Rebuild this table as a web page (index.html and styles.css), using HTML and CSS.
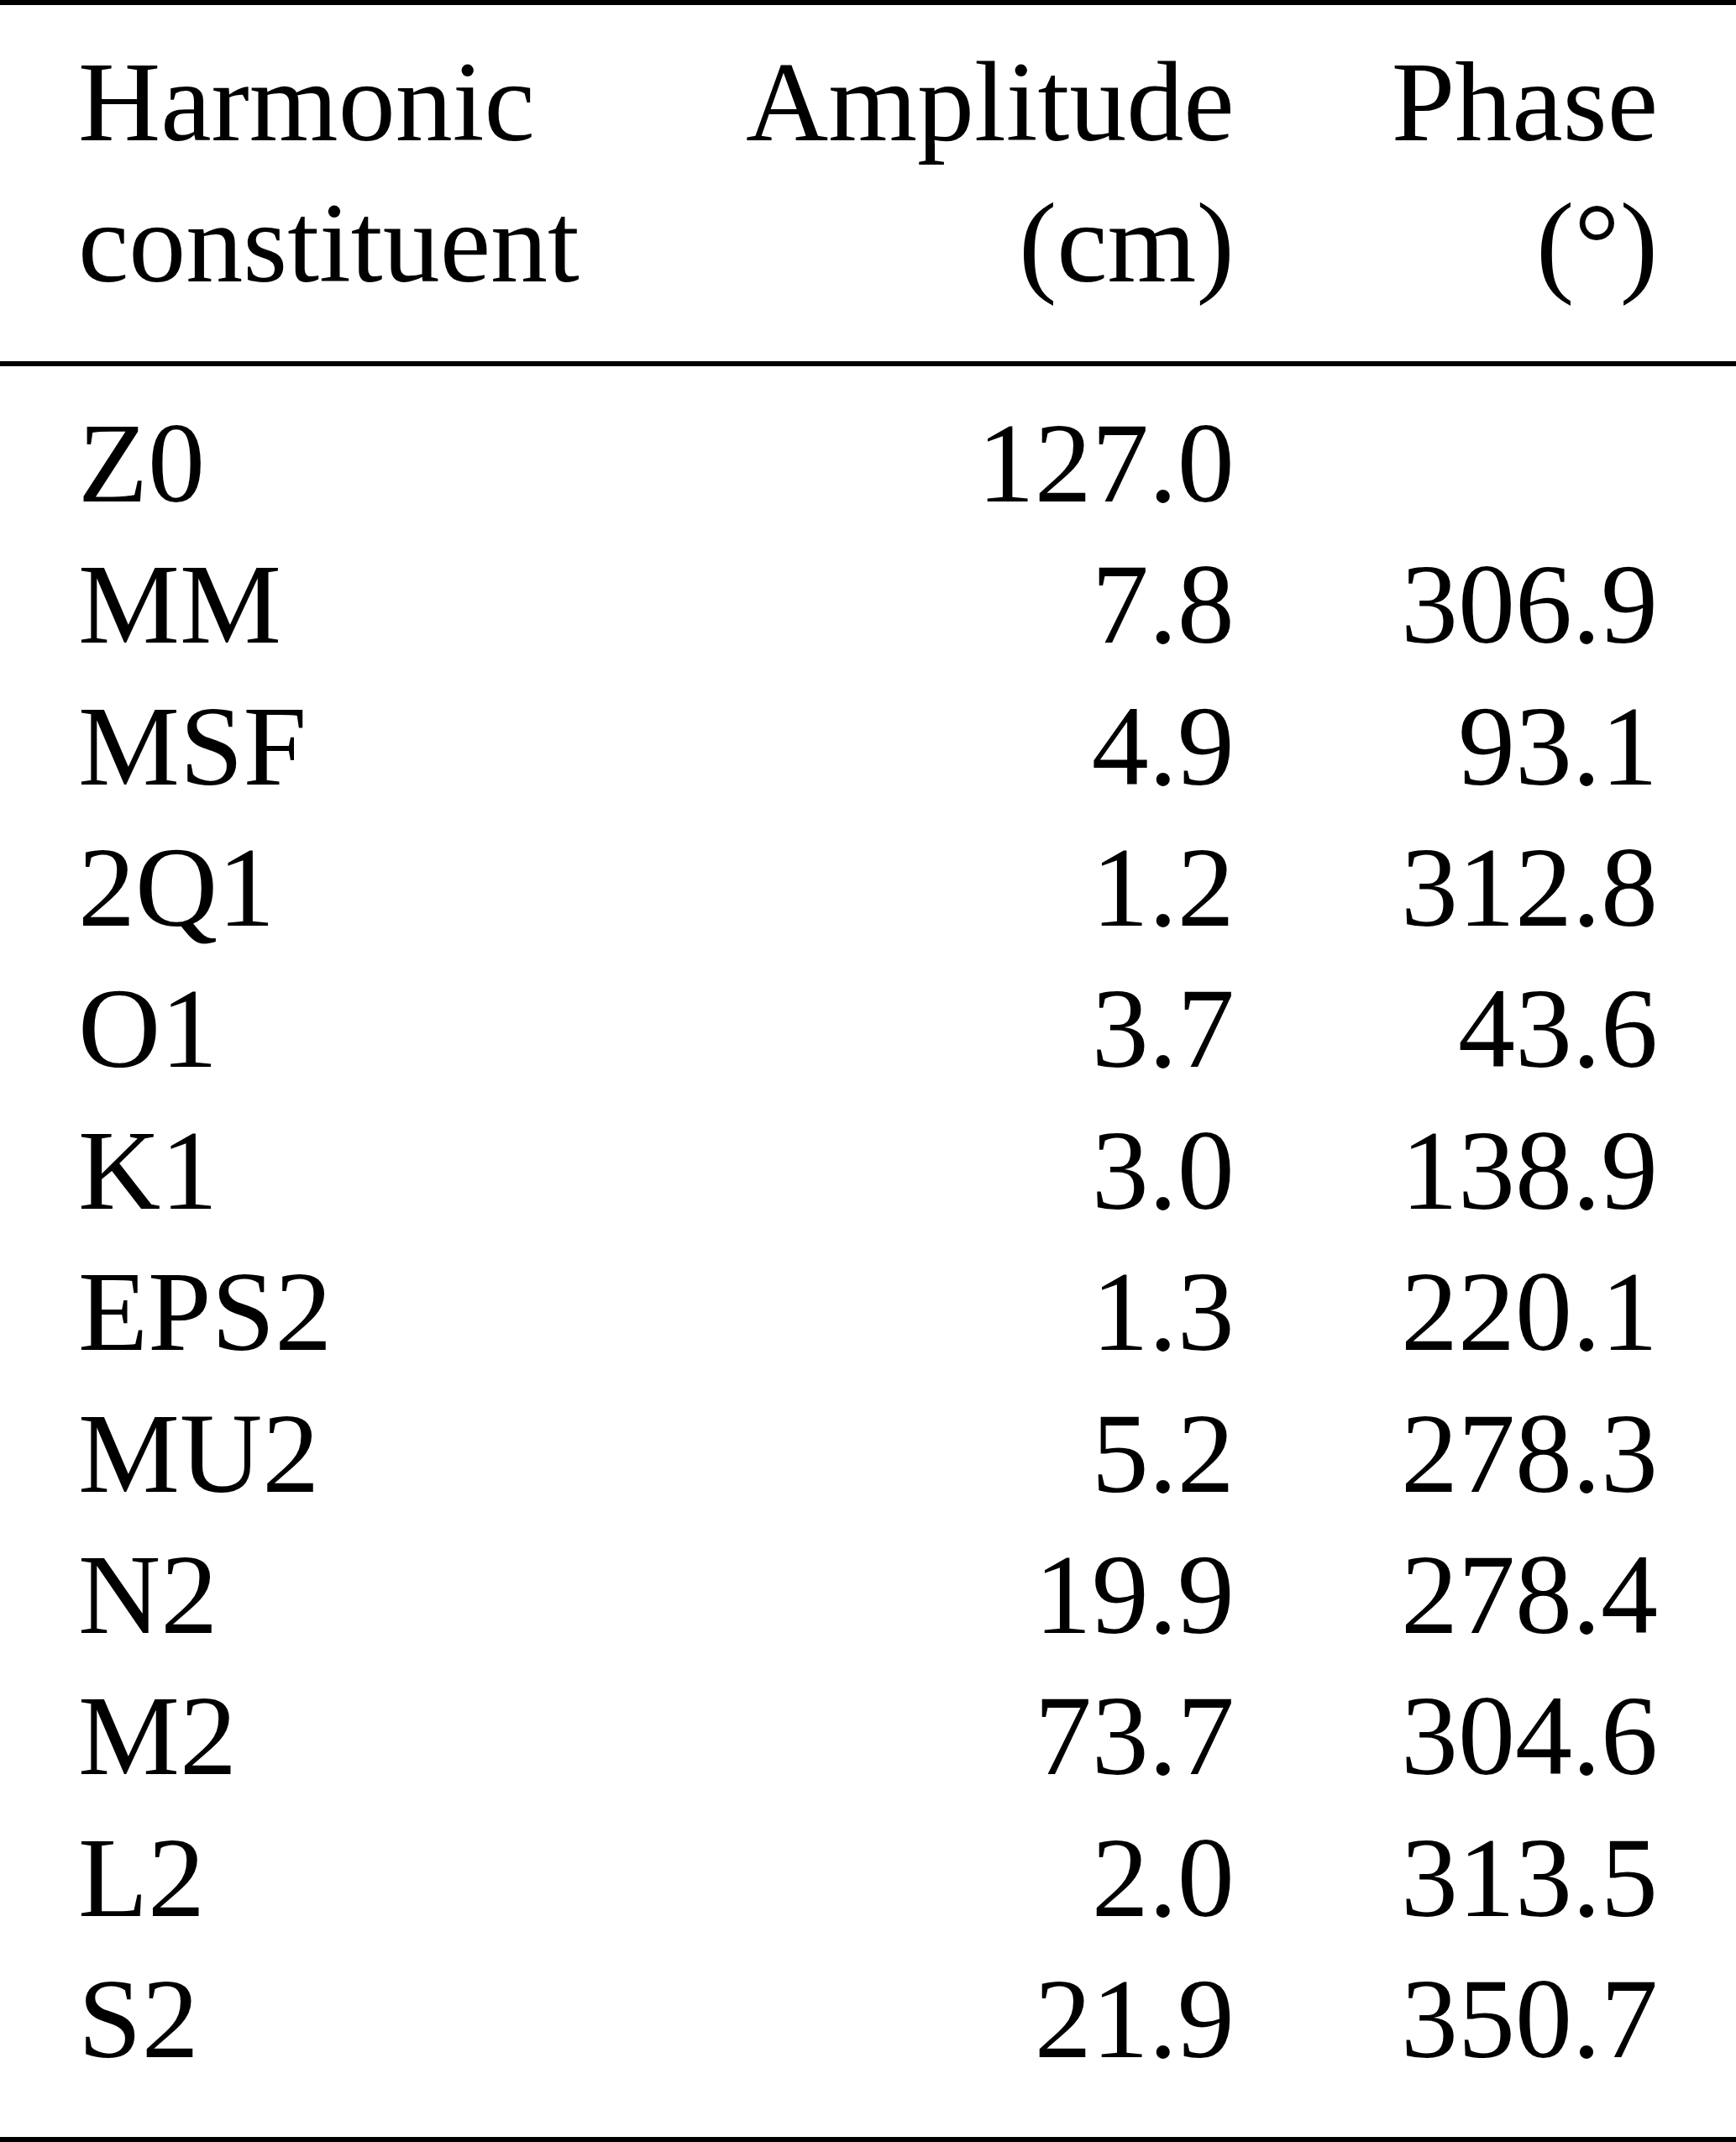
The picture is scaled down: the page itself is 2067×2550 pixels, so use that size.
FILE: index.html
```html
<!DOCTYPE html>
<html lang="en">
<head>
    <meta charset="UTF-8">
    <meta name="viewport" content="width=device-width, initial-scale=1.0">
    <title>Harmonic Constituents</title>
    <link rel="stylesheet" href="styles.css">
</head>
<body>
    <table class="tide-table">
        <thead>
            <tr>
                <th class="col-name">Harmonic<br>constituent</th>
                <th class="col-num">Amplitude<br>(cm)</th>
                <th class="col-num col-last">Phase<br>(°)</th>
            </tr>
        </thead>
        <tbody>
            <tr><td class="col-name">Z0</td><td class="col-num">127.0</td><td class="col-num col-last"></td></tr>
            <tr><td class="col-name">MM</td><td class="col-num">7.8</td><td class="col-num col-last">306.9</td></tr>
            <tr><td class="col-name">MSF</td><td class="col-num">4.9</td><td class="col-num col-last">93.1</td></tr>
            <tr><td class="col-name">2Q1</td><td class="col-num">1.2</td><td class="col-num col-last">312.8</td></tr>
            <tr><td class="col-name">O1</td><td class="col-num">3.7</td><td class="col-num col-last">43.6</td></tr>
            <tr><td class="col-name">K1</td><td class="col-num">3.0</td><td class="col-num col-last">138.9</td></tr>
            <tr><td class="col-name">EPS2</td><td class="col-num">1.3</td><td class="col-num col-last">220.1</td></tr>
            <tr><td class="col-name">MU2</td><td class="col-num">5.2</td><td class="col-num col-last">278.3</td></tr>
            <tr><td class="col-name">N2</td><td class="col-num">19.9</td><td class="col-num col-last">278.4</td></tr>
            <tr><td class="col-name">M2</td><td class="col-num">73.7</td><td class="col-num col-last">304.6</td></tr>
            <tr><td class="col-name">L2</td><td class="col-num">2.0</td><td class="col-num col-last">313.5</td></tr>
            <tr><td class="col-name">S2</td><td class="col-num">21.9</td><td class="col-num col-last">350.7</td></tr>
        </tbody>
    </table>
</body>
</html>
```

FILE: styles.css
```css
* {
    margin: 0;
    padding: 0;
    box-sizing: border-box;
}

html,
body {
    background: #fff;
}

body {
    font-family: 'Liberation Serif', 'Times New Roman', serif;
    font-size: 136px;
    line-height: 168.4px;
    color: #000;
}

.tide-table {
    width: 100%;
    border-collapse: separate;
    border-spacing: 0;
    border-top: 6px solid #000;
    border-bottom: 6px solid #000;
}

.tide-table th,
.tide-table td {
    font-weight: normal;
    white-space: nowrap;
    vertical-align: top;
}

/* header block */
.tide-table thead th {
    padding-top: 31px;
    padding-bottom: 56px;
    border-bottom: 6px solid #000;
}

/* space above first and below last data row */
.tide-table tbody tr:first-child td {
    padding-top: 31px;
}

.tide-table tbody tr:last-child td {
    padding-bottom: 56px;
}

.col-name {
    text-align: left;
    padding-left: 93px;
}

.col-num {
    width: 1%;
    text-align: right;
    padding-left: 187px;
}

.col-last {
    padding-right: 93px;
}
```
